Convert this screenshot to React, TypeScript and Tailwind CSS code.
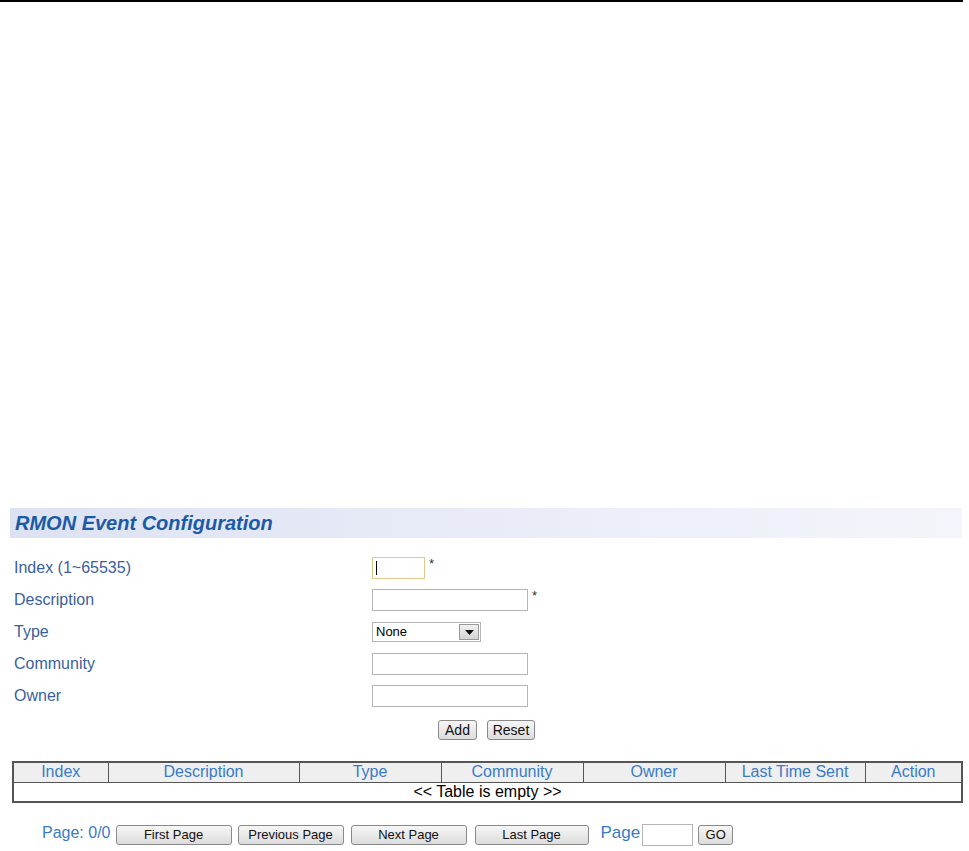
import React from "react";

const font = { fontFamily: '"Liberation Sans", Arial, sans-serif' };

function Btn({ children, className = "" }: { children: React.ReactNode; className?: string }) {
  return (
    <button
      className={
        "h-[20px] rounded-[3px] border border-[#8a8a8a] bg-gradient-to-b from-[#f6f6f6] to-[#dcdcdc] text-[13px] leading-[18px] text-[#111] " +
        className
      }
    >
      {children}
    </button>
  );
}

export default function App() {
  const rows: { label: string; field: React.ReactNode }[] = [
    {
      label: "Index (1~65535)",
      field: (
        <div className="flex items-start gap-[4px]">
          <div className="relative h-[22px] w-[53px] border border-[#e0c78a] bg-white">
            <span className="absolute left-[3px] top-[3px] h-[14px] w-px bg-black" />
          </div>
          <span className="text-[13px] leading-[14px] text-[#333]">*</span>
        </div>
      ),
    },
    {
      label: "Description",
      field: (
        <div className="flex items-start gap-[4px]">
          <div className="h-[22px] w-[156px] border border-[#b5b5b5] bg-white" />
          <span className="text-[13px] leading-[14px] text-[#333]">*</span>
        </div>
      ),
    },
    {
      label: "Type",
      field: (
        <div className="flex h-[20px] w-[109px] items-stretch border border-[#b5b5b5] bg-white">
          <span className="flex-1 pl-[3px] text-[13px] leading-[18px] text-black">None</span>
          <span className="m-[1px] flex w-[20px] items-center justify-center border border-[#9a9a9a] bg-gradient-to-b from-[#f2f2f2] to-[#d4d4d4]">
            <svg width="9" height="5" viewBox="0 0 9 5">
              <path d="M0 0h9L4.5 5z" fill="#111" />
            </svg>
          </span>
        </div>
      ),
    },
    {
      label: "Community",
      field: <div className="h-[22px] w-[156px] border border-[#b5b5b5] bg-white" />,
    },
    {
      label: "Owner",
      field: <div className="h-[22px] w-[156px] border border-[#b5b5b5] bg-white" />,
    },
  ];

  const cols: { name: string; w: string }[] = [
    { name: "Index", w: "w-[95px]" },
    { name: "Description", w: "w-[191px]" },
    { name: "Type", w: "w-[142px]" },
    { name: "Community", w: "w-[142px]" },
    { name: "Owner", w: "w-[142px]" },
    { name: "Last Time Sent", w: "w-[140px]" },
    { name: "Action", w: "" },
  ];

  return (
    <div className="min-h-[851px] w-[969px] bg-white" style={font}>
      {/* top rule */}
      <div className="h-[2px] w-[963px] bg-black" />

      <div className="pt-[506px]">
        {/* section title */}
        <div className="ml-[10px] flex h-[30px] w-[952px] items-center bg-gradient-to-r from-[#dde2f2] via-[#e9ecf8] to-[#f4f5fb] pl-[5px]">
          <span className="text-[20px] font-bold italic text-[#1b5aa6]">RMON Event Configuration</span>
        </div>

        {/* form */}
        <div className="mt-[14px] flex flex-col">
          {rows.map((r) => (
            <div key={r.label} className="flex h-[32px] items-center">
              <span className="w-[372px] pl-[14px] text-[16px] text-[#3b5f9c]">{r.label}</span>
              {r.field}
            </div>
          ))}
          <div className="mt-[8px] flex gap-[10px] pl-[438px]">
            <Btn className="w-[39px] text-[14px]">Add</Btn>
            <Btn className="w-[48px] text-[14px]">Reset</Btn>
          </div>
        </div>

        {/* table */}
        <table className="ml-[12px] mt-[21px] w-[951px] border-collapse border-2 border-[#555]">
          <thead>
            <tr className="h-[20px] bg-[#efefef]">
              {cols.map((c) => (
                <th
                  key={c.name}
                  className={"border border-[#555] p-0 text-[16px] font-normal leading-[18px] text-[#3a7bc6] " + c.w}
                >
                  {c.name}
                </th>
              ))}
            </tr>
          </thead>
          <tbody>
            <tr className="h-[20px]">
              <td colSpan={7} className="border border-[#555] p-0 text-center text-[16px] leading-[18px] text-black">
                &lt;&lt; Table is empty &gt;&gt;
              </td>
            </tr>
          </tbody>
        </table>

        {/* pager */}
        <div className="mt-[17px] flex items-center pl-[42px]">
          <span className="text-[16px] text-[#3a7bc6]">Page: 0/0</span>
          <Btn className="ml-[5px] mt-[4px] w-[116px]">First Page</Btn>
          <Btn className="ml-[6px] mt-[4px] w-[106px]">Previous Page</Btn>
          <Btn className="ml-[7px] mt-[4px] w-[116px]">Next Page</Btn>
          <Btn className="ml-[8px] mt-[4px] w-[114px]">Last Page</Btn>
          <span className="ml-[12px] text-[17px] text-[#3a7bc6]">Page</span>
          <div className="ml-[2px] mt-[4px] h-[22px] w-[51px] border border-[#b5b5b5] bg-white" />
          <Btn className="ml-[5px] mt-[4px] w-[35px]">GO</Btn>
        </div>
      </div>
    </div>
  );
}
